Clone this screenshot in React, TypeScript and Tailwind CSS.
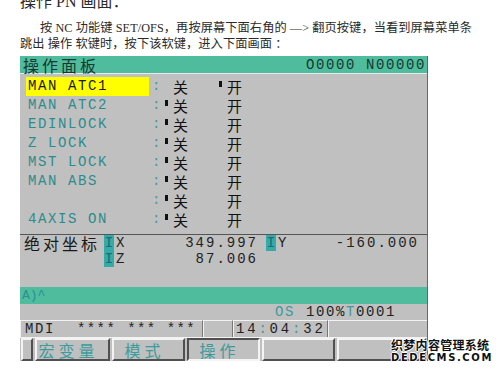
import React from 'react';

const mono = "font-['Liberation_Mono','DejaVu_Sans_Mono',monospace]";
const cjk = "font-['Noto_Sans_CJK_SC',sans-serif]";

interface Row {
  label: string;
  on: boolean;
  active?: boolean;
}

const rows: Row[] = [
  { label: 'MAN ATC1', on: true, active: true },
  { label: 'MAN ATC2', on: false },
  { label: 'EDINLOCK', on: false },
  { label: 'Z LOCK', on: false },
  { label: 'MST LOCK', on: false },
  { label: 'MAN ABS', on: false },
  { label: '', on: false },
  { label: '4AXIS ON', on: false },
];

function Mark({ show }: { show: boolean }) {
  return (
    <div className="w-[8px] h-full flex items-start pt-[4px]">
      {show && <div className="w-[3px] h-[6px] bg-[#111]" />}
    </div>
  );
}

function SoftKey({ label, width, pressed }: { label?: string; width: string; pressed?: boolean }) {
  return (
    <div
      className={`${width} h-full flex items-center justify-center pr-[8px] border-2 ${
        pressed
          ? 'border-t-[#505050] border-l-[#505050] border-b-[#f4f4f4] border-r-[#f4f4f4]'
          : 'border-t-[#f4f4f4] border-l-[#f4f4f4] border-b-[#505050] border-r-[#505050]'
      }`}
    >
      {label && (
        <span className={`${cjk} text-[16px] leading-none tracking-[4px] text-[#3c9c9c]`}>{label}</span>
      )}
    </div>
  );
}

export default function App() {
  return (
    <div className="w-[500px] h-[373px] bg-white relative overflow-hidden">
      {/* Intro text */}
      <div className="h-[56px] overflow-hidden font-['Liberation_Serif','Noto_Sans_CJK_SC',serif] text-[#2a2a2a]">
        <p className="ml-[20px] -mt-[6px] text-[16px] leading-[16px]">操作 PN 画面：</p>
        <p className="ml-[40px] mt-[10px] text-[12.2px] leading-[16px] tracking-[0.1px] whitespace-nowrap">
          按 NC 功能键 SET/OFS，再按屏幕下面右角的 —&gt; 翻页按键，当看到屏幕菜单条
        </p>
        <p className="ml-[20px] text-[12.2px] leading-[16px] tracking-[0.1px] whitespace-nowrap">
          跳出 操作 软键时，按下该软键，进入下面画面 ：
        </p>
      </div>

      {/* CNC screen */}
      <div className="ml-[20px] w-[408px] bg-[#c0c0c0] border-r border-[#666]">
        {/* Title bar */}
        <div className="h-[17px] bg-[#4fbd9d] flex items-center justify-between border-b border-[#eaeaea] box-content">
          <span className={`${cjk} pl-[3px] text-[16px] leading-none tracking-[3px] text-[#17382f]`}>操作面板</span>
          <span className={`${mono} slashed-zero text-[14px] leading-none tracking-[1.6px] text-[#17382f] pr-[1px]`}>
            O0000 N00000
          </span>
        </div>

        {/* Switch rows */}
        <div className="pt-[3px] pb-[5px] border-b border-[#555]">
          {rows.map((r, i) => (
            <div key={i} className="h-[19px] flex items-center">
              <div
                className={`ml-[6px] w-[123px] h-full pl-[2px] flex items-center ${
                  r.active ? 'bg-[#ffff00] text-[#1a1a1a]' : 'text-[#2b8c8c]'
                } ${mono} text-[14px] tracking-[1.6px] whitespace-pre`}
              >
                {r.label}
              </div>
              <div className={`w-[16px] pl-[3px] ${mono} text-[14px] text-[#4a9a9a]`}>:</div>
              <Mark show={!r.on} />
              <div className={`w-[46px] ${cjk} text-[15px] leading-none text-[#111]`}>关</div>
              <Mark show={r.on} />
              <div className={`${cjk} text-[15px] leading-none text-[#111]`}>开</div>
            </div>
          ))}
        </div>

        {/* Absolute coordinates */}
        <div className={`pb-[20px] ${mono} text-[14px] text-[#222] slashed-zero`}>
          <div className="h-[16px] flex items-center">
            <div className={`w-[84px] pl-[4px] ${cjk} text-[16px] leading-none tracking-[3px] text-[#1a1a1a]`}>绝对坐标</div>
            <div className="w-[10px] h-full bg-[#34aaa9] flex items-center justify-center text-[#1b6b70]">I</div>
            <div className="w-[12px] pl-[2px] leading-none">X</div>
            <div className="w-[132px] text-right leading-none tracking-[2px]">349.997</div>
            <div className="w-[8px]" />
            <div className="w-[10px] h-full bg-[#34aaa9] flex items-center justify-center text-[#1b6b70]">I</div>
            <div className="w-[12px] pl-[2px] leading-none">Y</div>
            <div className="w-[131px] text-right leading-none tracking-[2px]">-160.000</div>
          </div>
          <div className="h-[16px] flex items-center">
            <div className="w-[84px]" />
            <div className="w-[10px] h-full bg-[#34aaa9] flex items-center justify-center text-[#1b6b70]">I</div>
            <div className="w-[12px] pl-[2px] leading-none">Z</div>
            <div className="w-[132px] text-right leading-none tracking-[2px]">87.006</div>
          </div>
        </div>

        {/* Input line */}
        <div className={`h-[17px] bg-[#4fbd9d] flex items-center pl-[2px] ${mono} text-[13px] text-[#2b8f95]`}>
          A)^
        </div>

        {/* Override / tool row */}
        <div className={`h-[16px] flex items-center ${mono} text-[14px] tracking-[1.6px] leading-none slashed-zero`}>
          <span className="ml-[255px] text-[#3f9a9c]">OS</span>
          <span className="ml-[11px] text-[#1f1f1f]">100%</span>
          <span className="text-[#3f9a9c]">T</span>
          <span className="text-[#1f1f1f]">0001</span>
        </div>

        {/* Status row */}
        <div className={`h-[17px] flex ${mono} text-[14px] leading-none text-[#1f1f1f] slashed-zero`}>
          <div className="w-[183px] h-full flex items-center pl-[4px] border-t border-l border-t-[#f2f2f2] border-l-[#f2f2f2] border-r border-r-[#777]">
            <span className="tracking-[1.6px]">MDI</span>
            <span className="ml-[22px] tracking-[1.4px]">****</span>
            <span className="ml-[11px] tracking-[1.4px]">***</span>
            <span className="ml-[10px] tracking-[1.4px]">***</span>
          </div>
          <div className="w-[30px] h-full border-t border-l border-t-[#f2f2f2] border-l-[#f2f2f2] border-r border-r-[#777]" />
          <div className="w-[95px] h-full flex items-center pl-[2px] border-t border-l border-t-[#f2f2f2] border-l-[#f2f2f2] border-r border-r-[#777] tracking-[2.8px]">
            14<span className="text-[#3f9a9c]">:</span>04<span className="text-[#3f9a9c]">:</span>32
          </div>
          <div className="flex-1 h-full border-t border-l border-t-[#f2f2f2] border-l-[#f2f2f2]" />
        </div>

        {/* Soft keys */}
        <div className="h-[24px] flex gap-[2px] pl-[1px] bg-[#c0c0c0] border-t border-[#f2f2f2]">
          <SoftKey width="w-[12px]" />
          <SoftKey width="w-[75px]" label="宏变量" />
          <SoftKey width="w-[73px]" label="模式" />
          <SoftKey width="w-[73px]" label="操作" pressed />
          <SoftKey width="w-[73px]" />
          <SoftKey width="w-[89px]" />
        </div>
      </div>

      {/* Watermark */}
      <div className="absolute left-[391px] top-[338px] flex flex-col items-start gap-[2px] font-bold text-[#111] [text-shadow:1px_0_0_#fff,-1px_0_0_#fff,0_1px_0_#fff,0_-1px_0_#fff]">
        <span className={`${cjk} text-[12px] leading-[13px] tracking-[0.3px] font-bold`}>织梦内容管理系统</span>
        <span className="font-['DejaVu_Sans',sans-serif] text-[10px] leading-[10px] tracking-[1.6px] font-bold">DEDECMS.COM</span>
      </div>
    </div>
  );
}
